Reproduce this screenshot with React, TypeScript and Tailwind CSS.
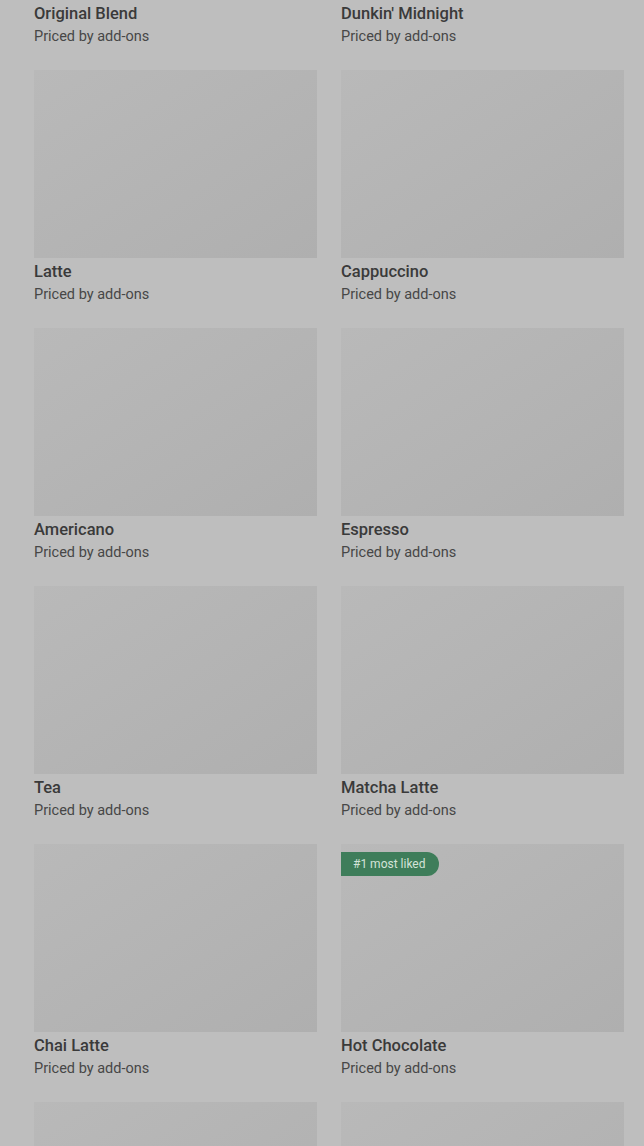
import React from "react";

const items = [
  { name: "Original Blend" },
  { name: "Dunkin' Midnight" },
  { name: "Latte" },
  { name: "Cappuccino" },
  { name: "Americano" },
  { name: "Espresso" },
  { name: "Tea" },
  { name: "Matcha Latte" },
  { name: "Chai Latte" },
  { name: "Hot Chocolate", badge: "#1 most liked" },
  { name: "Iced Coffee", hideText: true },
  { name: "Cold Brew", hideText: true },
];

function Card({ name, badge, hideText }: { name: string; badge?: string; hideText?: boolean }) {
  return (
    <div className="flex flex-col">
      <div className="relative h-[188px] bg-gradient-to-br from-[#b9b9b9] to-[#afafaf]">
        {badge && (
          <span className="absolute left-0 top-[8px] h-[24px] rounded-r-full bg-[#3e7d5a] pl-[12px] pr-[13px] text-[12px] leading-[24px] text-[#d3e3d8]">
            {badge}
          </span>
        )}
      </div>
      {!hideText && (
        <>
          <div className="mt-[4px] text-[16.5px] font-medium leading-[20px] text-[#3a3a3a]">{name}</div>
          <div className="mt-[3px] text-[14.5px] leading-[20px] text-[#474747]">Priced by add-ons</div>
        </>
      )}
    </div>
  );
}

export default function App() {
  return (
    <div
      className="h-[1146px] overflow-hidden bg-[#bebebe]"
      style={{ fontFamily: "Roboto, 'Liberation Sans', sans-serif" }}
    >
      <div className="-mt-[188px] grid grid-cols-2 gap-x-[24px] gap-y-[23px] pl-[34px] pr-[20px]">
        {items.map((it) => (
          <Card key={it.name} name={it.name} badge={it.badge} hideText={it.hideText} />
        ))}
      </div>
    </div>
  );
}
